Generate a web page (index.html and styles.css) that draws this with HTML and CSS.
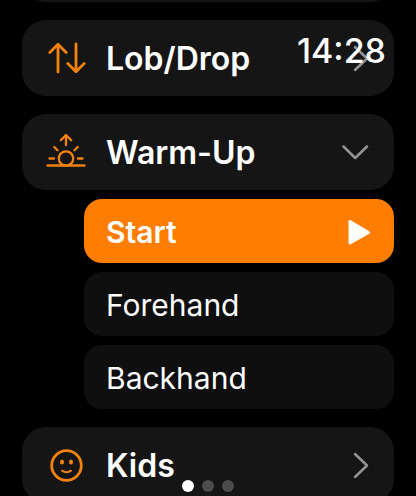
FILE: index.html
```
<!DOCTYPE html>
<html lang="en">
<head>
    <meta charset="UTF-8">
    <meta name="viewport" content="width=device-width, initial-scale=1.0">
    <title>Training</title>
    <link rel="stylesheet" href="styles.css">
</head>
<body>
    <div class="screen">
        <time class="clock">14:28</time>

        <main class="list">
            <!-- Card scrolled off the top -->
            <div class="card"></div>

            <button class="card" type="button">
                <svg class="icon" viewBox="0 0 40 40" aria-hidden="true">
                    <path d="M12 34V6.500M3.800 14.500l8.200-8.200 8.200 8.200M30 6V33.500M21.800 25.500l8.200 8.200 8.200-8.200"/>
                </svg>
                <span class="title">Lob/Drop</span>
                <svg class="chevron" viewBox="0 0 28 28" aria-hidden="true">
                    <path d="M13 3l12 11.500L13 26"/>
                </svg>
            </button>

            <section class="group">
                <button class="card" type="button" aria-expanded="true">
                    <svg class="icon fine" viewBox="0 0 40 40" aria-hidden="true">
                        <path d="M1.500 33.500h37M20 13V3.500M14.800 8.200l5.200-5.200 5.200 5.200M8.300 15l3.200 3.200M31.700 15l-3.200 3.200M3.500 26.500h4.500M32 26.500h4.500"/>
                        <circle cx="20" cy="26.500" r="7.200"/>
                    </svg>
                    <span class="title">Warm-Up</span>
                    <svg class="chevron" viewBox="0 0 28 28" aria-hidden="true">
                        <path d="M1.500 8.500L13.200 20 25 8.500"/>
                    </svg>
                </button>
                <div class="options">
                    <button class="option start" type="button">
                        <span>Start</span>
                        <svg class="play" viewBox="0 0 24 26" aria-hidden="true">
                            <path d="M2 2.500v21.500L20.500 13.500z"/>
                        </svg>
                    </button>
                    <button class="option" type="button">Forehand</button>
                    <button class="option" type="button">Backhand</button>
                </div>
            </section>

            <button class="card" type="button">
                <svg class="icon" viewBox="0 0 40 40" aria-hidden="true">
                    <circle cx="20.500" cy="20.500" r="14.800"/>
                    <path class="thin" d="M16 25.700q4.500 3 9 0"/>
                    <ellipse class="eye" cx="16" cy="17" rx="2" ry="2.500"/>
                    <ellipse class="eye" cx="25" cy="17" rx="2" ry="2.500"/>
                </svg>
                <span class="title">Kids</span>
                <svg class="chevron" viewBox="0 0 28 28" aria-hidden="true">
                    <path d="M13 3l12 11.500L13 26"/>
                </svg>
            </button>
        </main>

        <!-- Page indicator -->
        <div class="dots">
            <span class="dot active"></span>
            <span class="dot"></span>
            <span class="dot"></span>
        </div>
    </div>
</body>
</html>
```
FILE: styles.css
```
* {
    box-sizing: border-box;
}

body {
    margin: 0;
    background-color: #000;
    color: #fff;
    font-family: Inter, "Liberation Sans", sans-serif;
}

.screen {
    position: relative;
    height: 100vh;
    overflow: hidden;
}

.clock {
    position: absolute;
    top: 31px;
    right: 30px;
    z-index: 1;
    font-size: 34px;
    line-height: 40px;
    font-weight: 500;
}

/* The list is scrolled, so it starts above the screen */
.list {
    display: flex;
    flex-direction: column;
    gap: 18px;
    margin-top: -74px;
    padding: 0 22px;
}

button {
    border: none;
    color: inherit;
    font-family: inherit;
    text-align: left;
    cursor: pointer;
}

.card {
    display: flex;
    flex-shrink: 0;
    align-items: center;
    width: 100%;
    min-height: 76px;
    padding: 0 24px;
    border-radius: 24px;
    background-color: #151515;
}

.title {
    flex: 1;
    margin-left: 20px;
    padding-top: 2px;
    font-size: 32px;
    line-height: 40px;
    font-weight: 600;
}

.icon {
    width: 40px;
    height: 40px;
    fill: none;
    stroke: #f5820f;
    stroke-width: 2.8;
    stroke-linecap: round;
    stroke-linejoin: round;
}

.icon.fine {
    stroke-width: 2.3;
}

.icon .thin {
    stroke-width: 2;
}

.icon .eye {
    fill: #f5820f;
    stroke: none;
}

.chevron {
    width: 28px;
    height: 28px;
    fill: none;
    stroke: #949494;
    stroke-width: 2.5;
    stroke-linecap: round;
    stroke-linejoin: round;
}

.options {
    display: flex;
    flex-direction: column;
    gap: 9px;
    margin-top: 9px;
    padding-left: 62px;
}

.option {
    display: flex;
    align-items: center;
    justify-content: space-between;
    min-height: 64px;
    padding: 2px 22px 0;
    border-radius: 18px;
    background-color: #0f0f0f;
    font-size: 30px;
    line-height: 36px;
    font-weight: 400;
}

.option.start {
    background-color: #ff7d00;
    font-weight: 600;
}

.play {
    width: 24px;
    height: 26px;
    fill: #fff;
    stroke: #fff;
    stroke-width: 3;
    stroke-linejoin: round;
}

.dots {
    position: absolute;
    bottom: 4px;
    left: 0;
    right: 0;
    display: flex;
    justify-content: center;
    gap: 8px;
}

.dot {
    width: 12px;
    height: 12px;
    border-radius: 50%;
    background-color: #4c4c4c;
}

.dot.active {
    background-color: #fff;
}
```
